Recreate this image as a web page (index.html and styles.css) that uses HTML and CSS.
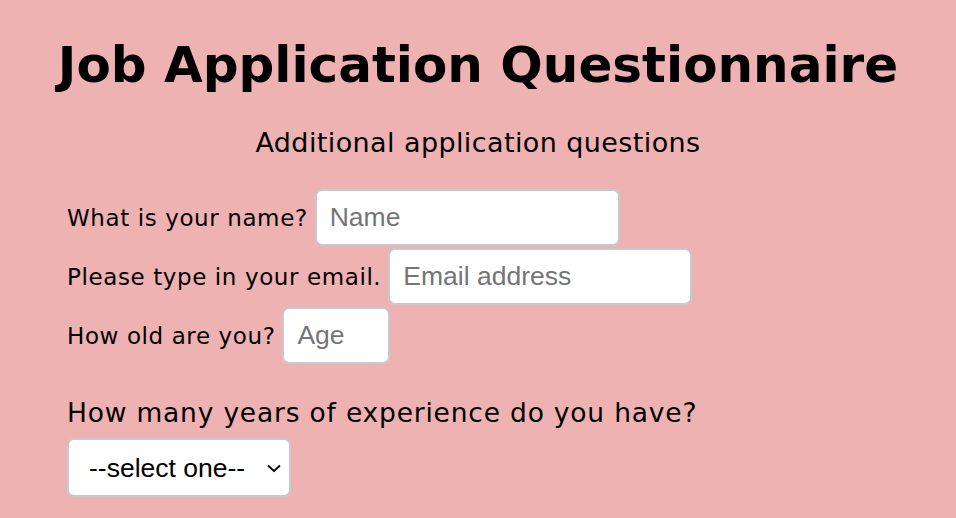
FILE: index.html
```html
<!DOCTYPE html>
<html>
<head>
<meta charset="utf-8">
<link rel="stylesheet" href="styles.css">
</head>
<body>
<h1 class="title">Job Application Questionnaire</h1>
<p class="subtitle">Additional application questions</p>
<form class="form">
  <div class="row">
    <label class="label" for="name">What is your name?</label>
    <input class="field field-name" id="name" type="text" placeholder="Name">
  </div>
  <div class="row">
    <label class="label" for="email">Please type in your email.</label>
    <input class="field field-email" id="email" type="email" placeholder="Email address">
  </div>
  <div class="row">
    <label class="label" for="age">How old are you?</label>
    <input class="field field-age" id="age" type="text" placeholder="Age">
  </div>
  <p class="question">How many years of experience do you have?</p>
  <div class="select-wrap">
    <select class="select">
      <option>--select one--</option>
    </select>
    <svg class="chev" width="16" height="10" viewBox="0 0 16 10"><path d="M2 2.5 L8 8 L14 2.5" fill="none" stroke="#000" stroke-width="1.7"/></svg>
  </div>
</form>
</body>
</html>
```
FILE: styles.css
```css
html, body {
  margin: 0;
  padding: 0;
  background: #efb2b2;
}
body {
  font-family: "DejaVu Sans", Verdana, sans-serif;
  color: #000;
}
.title {
  margin: 0;
  padding-top: 36px;
  text-align: center;
  font-size: 50px;
  font-weight: bold;
  line-height: 58px;
}
.subtitle {
  margin: 0;
  margin-top: 34px;
  text-align: center;
  font-size: 27px;
  letter-spacing: 0.4px;
  line-height: 30px;
}
.form {
  padding: 31px 0 0 67px;
  display: flex;
  flex-direction: column;
  align-items: flex-start;
}
.row {
  display: flex;
  align-items: center;
  gap: 7px;
  margin-bottom: 2px;
  height: 57px;
}
.label {
  font-size: 23px;
  letter-spacing: 0.6px;
}
.field {
  box-sizing: border-box;
  height: 57px;
  border: 2px solid #c9c9c9;
  border-radius: 7px;
  background: #fff;
  padding: 0 13px;
  font-family: "Liberation Sans", Arial, sans-serif;
  font-size: 26.5px;
  outline: none;
}
.field::placeholder {
  color: #757575;
}
.field-name { width: 305px; }
.field-email { width: 304px; }
.field-age { width: 108px; }
.question {
  margin: 32px 0 0 0;
  font-size: 26.5px;
  letter-spacing: 0.8px;
  line-height: 30px;
}
.select-wrap {
  position: relative;
  margin-top: 10px;
}
.select {
  appearance: none;
  -webkit-appearance: none;
  box-sizing: border-box;
  width: 224px;
  height: 59px;
  border: 2px solid #c9c9c9;
  border-radius: 7px;
  background: #fff;
  padding: 0 0 0 20px;
  font-family: "Liberation Sans", Arial, sans-serif;
  font-size: 26.5px;
  color: #000;
}
.chev {
  position: absolute;
  right: 9px;
  top: 25px;
  pointer-events: none;
}
```
